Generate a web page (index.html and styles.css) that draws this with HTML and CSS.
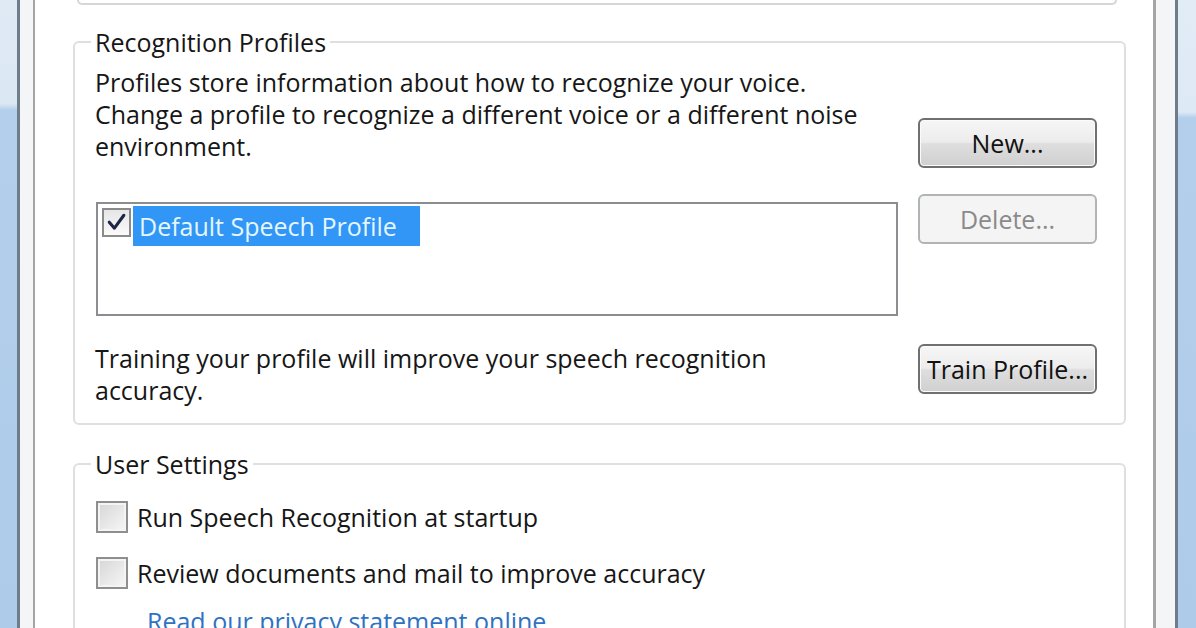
FILE: index.html
```html
<!DOCTYPE html>
<html>
<head>
<meta charset="utf-8">
<link rel="stylesheet" href="styles.css">
</head>
<body>
<div class="screen">
  <div class="blue blue-left"></div>
  <div class="edge"></div>
  <div class="pad pad-left"></div>
  <div class="dialog">
    <div class="prev-box"></div>

    <fieldset class="group group-profiles">
      <legend class="legend">Recognition Profiles</legend>
      <div class="row row-desc">
        <p class="text desc">Profiles store information about how to recognize your voice.<br>Change a profile to recognize a different voice or a different noise<br>environment.</p>
        <button class="btn btn-new">New...</button>
      </div>
      <div class="row row-list">
        <div class="listbox">
          <div class="list-item">
            <span class="check check-on">
              <svg viewBox="0 0 28 28" width="24" height="24"><path d="M5 13 L11 20 L22 5" fill="none" stroke="#1d2744" stroke-width="3.6" stroke-linecap="round" stroke-linejoin="round"/></svg>
            </span>
            <span class="item-label">Default Speech Profile</span>
          </div>
        </div>
        <button class="btn btn-delete" disabled>Delete...</button>
      </div>
      <div class="row row-train">
        <p class="text train-text">Training your profile will improve your speech recognition<br>accuracy.</p>
        <button class="btn btn-train">Train Profile...</button>
      </div>
    </fieldset>

    <fieldset class="group group-user">
      <legend class="legend">User Settings</legend>
      <label class="opt opt-first"><span class="check check-off"></span><span class="opt-text">Run Speech Recognition at startup</span></label>
      <label class="opt opt-second"><span class="check check-off"></span><span class="opt-text">Review documents and mail to improve accuracy</span></label>
      <a class="link">Read our privacy statement online</a>
    </fieldset>
  </div>
  <div class="pad pad-right"></div>
  <div class="edge"></div>
  <div class="blue blue-right"></div>
</div>
</body>
</html>
```

FILE: styles.css
```css
html, body {
  margin: 0;
  padding: 0;
  background: #ffffff;
}

body {
  width: 1196px;
  height: 628px;
  overflow: hidden;
  font-family: "Open Sans", "Noto Sans", sans-serif;
  color: #161616;
}

.screen {
  display: flex;
  height: 628px;
}

.blue {
  flex: none;
}

.blue-left {
  width: 17px;
  background: linear-gradient(to bottom, #dfeaf5 0, #dbe7f3 104px, #b3cfeb 110px, #aecbea 100%);
}

.blue-right {
  width: 18px;
  background: linear-gradient(to bottom, #e2ecf7 0, #dde9f5 112px, #b3cfeb 118px, #aecbea 100%);
}

.edge {
  flex: none;
  width: 3px;
  background: #6f7c89;
}

.pad {
  flex: none;
  background: #f3f5f7;
}

.pad-left {
  width: 13px;
}

.pad-right {
  width: 19px;
}

.dialog {
  flex: 1;
  background: #ffffff;
  border-left: 2px solid #a5a5a5;
  border-right: 3px solid #a5a5a5;
  padding: 0 27px 0 38px;
  overflow: hidden;
}

.prev-box {
  height: 3px;
  margin: 0 9px 0 4px;
  border: 2px solid #d4d6d8;
  border-top: none;
  border-radius: 0 0 5px 5px;
}

.group {
  margin: 23px 0 0 0;
  border: 2px solid #dde0e3;
  border-radius: 6px;
  padding: 0 27px 17px 20px;
  min-width: 0;
}

.group-user {
  margin-top: 25px;
  padding-bottom: 40px;
}

.legend {
  margin-left: -4px;
  padding: 0 4px;
  font-size: 25px;
  line-height: 28px;
  color: #161616;
}

.text {
  margin: 0;
  font-size: 25px;
  line-height: 32px;
}

.row {
  display: flex;
  justify-content: space-between;
  align-items: flex-start;
}

.desc {
  margin-top: 10px;
}

.btn {
  flex: none;
  width: 179px;
  height: 50px;
  padding: 0;
  font-family: inherit;
  font-size: 25px;
  color: #111111;
  border: 2px solid #707070;
  border-radius: 6px;
  background: linear-gradient(to bottom, #f6f6f6 0%, #ececec 48%, #dedede 52%, #d0d0d0 100%);
  box-shadow: inset 0 0 0 1px #fbfbfb;
}

.btn-new {
  margin-top: 62px;
}

.btn-delete {
  margin-top: 26px;
  color: #8a8a8a;
  border-color: #b0b4b7;
  background: #f4f4f4;
  box-shadow: none;
}

.btn-train {
  margin-top: 28px;
}

.listbox {
  margin-top: 34px;
  margin-left: 1px;
  width: 802px;
  height: 114px;
  box-sizing: border-box;
  border: 2px solid #8b8d90;
  background: #ffffff;
}

.list-item {
  display: flex;
  align-items: flex-start;
}

.check {
  flex: none;
  box-sizing: border-box;
  display: flex;
  align-items: center;
  justify-content: center;
}

.check-on {
  width: 29px;
  height: 29px;
  margin: 4px 0 0 4px;
  border: 2px solid #8a8a8a;
  background: linear-gradient(to bottom, #e6e6e6, #fafafa);
}

.check-off {
  width: 32px;
  height: 32px;
  border: 2px solid #8e8f90;
  background: linear-gradient(135deg, #d6d6d6, #f7f7f7);
  box-shadow: inset 0 0 0 2px #f4f4f4;
}

.item-label {
  box-sizing: border-box;
  width: 287px;
  height: 40px;
  margin: 2px 0 0 2px;
  padding-left: 6px;
  line-height: 40px;
  font-size: 25px;
  color: #e4f6ff;
  background: #3196f5;
}

.train-text {
  margin-top: 26px;
}

.opt {
  display: flex;
  align-items: center;
  gap: 9px;
  margin-left: 1px;
  height: 32px;
  font-size: 25px;
}

.opt-first {
  margin-top: 23px;
}

.opt-second {
  margin-top: 24px;
}

.link {
  display: block;
  margin: 16px 0 0 52px;
  font-size: 25px;
  line-height: 32px;
  color: #2f72c2;
}
```
